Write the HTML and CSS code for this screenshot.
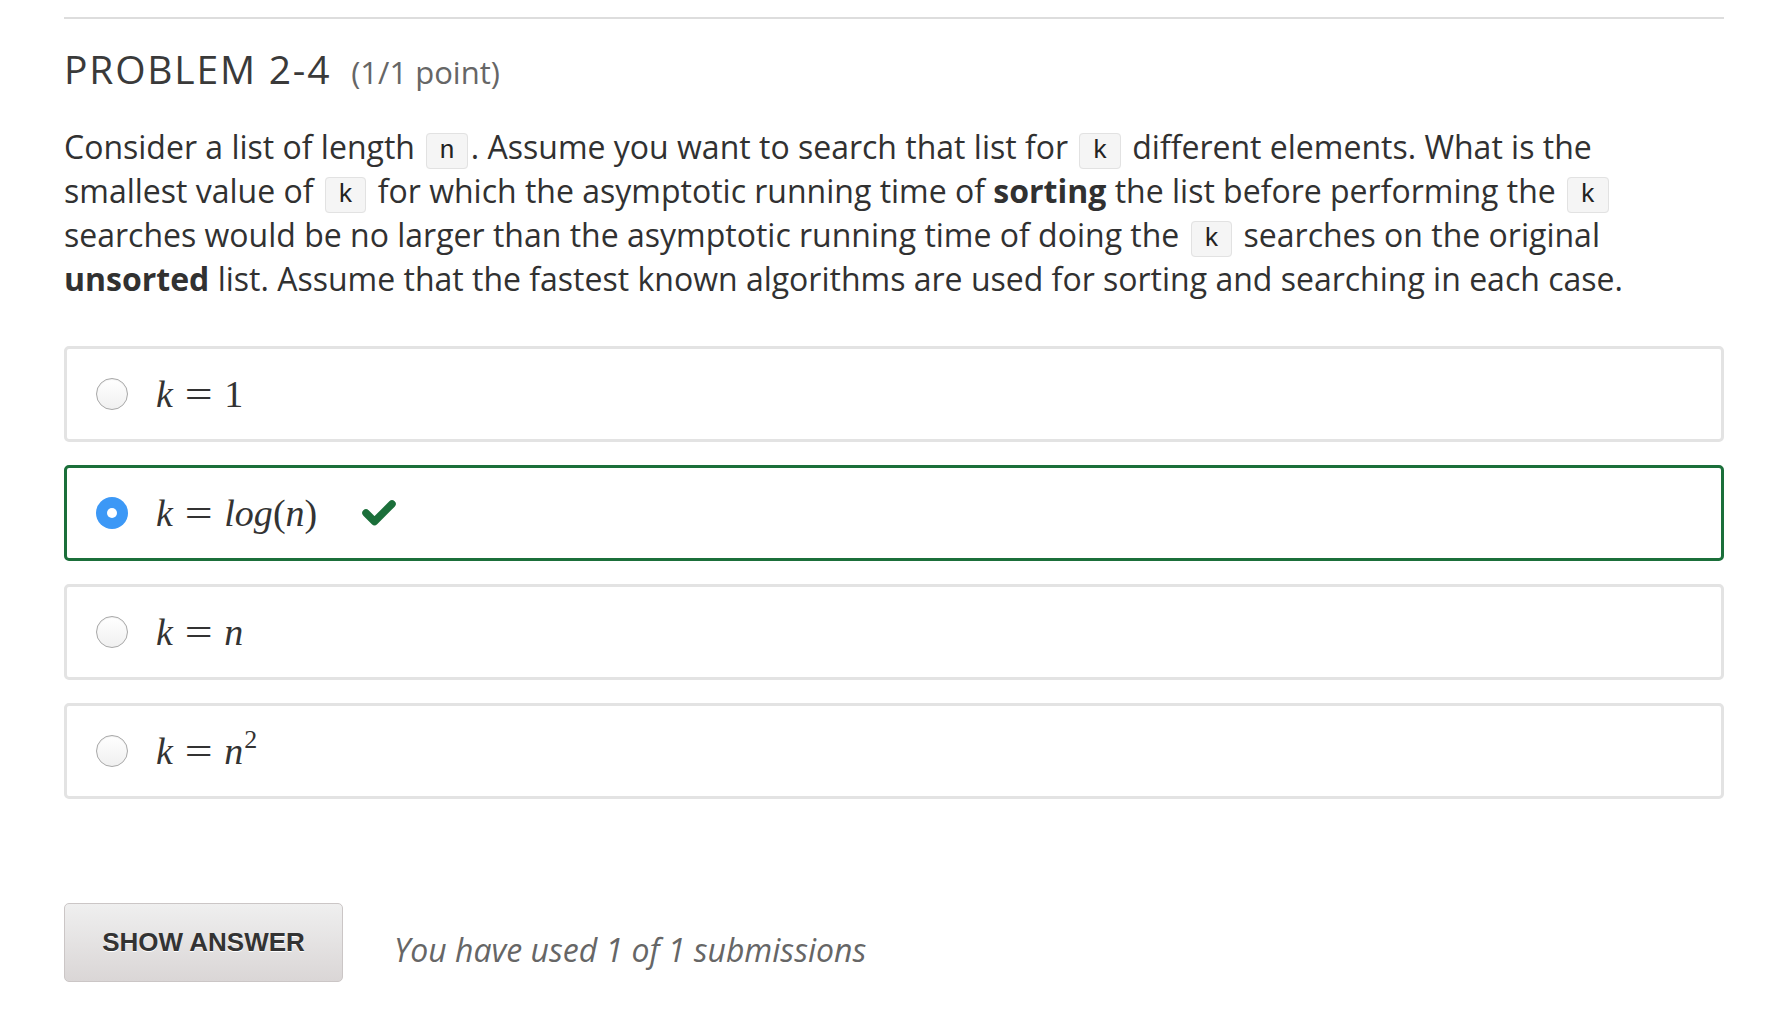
FILE: index.html
```html
<!DOCTYPE html>
<html lang="en">
<head>
<meta charset="utf-8">
<title>Problem 2-4</title>
<link rel="stylesheet" href="styles.css">
</head>
<body>
<div class="page">
  <div class="rule"></div>
  <h2 class="problem-title">PROBLEM 2-4 <span class="points">(1/1 point)</span></h2>
  <p class="prompt">Consider a list of length <code>n</code>. Assume you want to search that list for <code>k</code> different elements. What is the smallest value of <code>k</code> for which the asymptotic running time of <strong>sorting</strong> the list before performing the <code>k</code> searches would be no larger than the asymptotic running time of doing the <code>k</code> searches on the original <strong>unsorted</strong> list. Assume that the fastest known algorithms are used for sorting and searching in each case.</p>

  <div class="choices">
    <label class="choice">
      <span class="radio"></span>
      <span class="math"><i>k</i><span class="eq">=</span>1</span>
    </label>
    <label class="choice correct">
      <span class="radio checked"></span>
      <span class="math"><i>k</i><span class="eq">=</span><i>log</i>(<i>n</i>)</span>
      <svg class="check" width="36" height="28" viewBox="0 0 36 28" aria-hidden="true">
        <polyline points="5,14 13.5,22.5 31,5" fill="none" stroke="#1b6f3a" stroke-width="7.5" stroke-linecap="round" stroke-linejoin="round"/>
      </svg>
    </label>
    <label class="choice">
      <span class="radio"></span>
      <span class="math"><i>k</i><span class="eq">=</span><i>n</i></span>
    </label>
    <label class="choice">
      <span class="radio"></span>
      <span class="math"><i>k</i><span class="eq">=</span><i>n</i><sup>2</sup></span>
    </label>
  </div>

  <div class="actions">
    <button class="show-answer">SHOW ANSWER</button>
    <span class="submissions">You have used 1 of 1 submissions</span>
  </div>
</div>
</body>
</html>
```

FILE: styles.css
```css
html, body {
  margin: 0;
  padding: 0;
  background: #ffffff;
}

.page {
  padding: 0 66px 0 64px;
  font-family: "Open Sans", "Noto Sans", sans-serif;
  color: #313131;
}

.rule {
  margin-top: 17px;
  height: 2px;
  background: #dddddd;
}

.problem-title {
  margin: 28px 0 0 0;
  font-size: 39px;
  line-height: 44px;
  font-weight: 400;
  letter-spacing: 1.8px;
  color: #3a3a3a;
}

.points {
  margin-left: 8px;
  font-size: 31px;
  letter-spacing: 0;
  color: #666666;
}

.prompt {
  margin: 31px 0 0 0;
  max-width: 1600px;
  font-size: 32px;
  line-height: 44px;
  color: #313131;
}

.prompt strong {
  font-weight: 700;
}

.prompt code {
  font-family: "Liberation Mono", "DejaVu Sans Mono", monospace;
  font-size: 26px;
  line-height: 1;
  padding: 2px 12px;
  margin: 0 3px;
  background: #f5f5f5;
  border: 1px solid #e2e2e2;
  border-radius: 4px;
  color: #222;
  vertical-align: 1px;
}

.choices {
  margin-top: 45px;
  display: flex;
  flex-direction: column;
  gap: 23px;
}

.choice {
  display: flex;
  align-items: center;
  height: 96px;
  box-sizing: border-box;
  border: 3px solid #e3e3e3;
  border-radius: 5px;
  padding-left: 29px;
}

.choice.correct {
  border-color: #1b6f3a;
}

.radio {
  width: 32px;
  height: 32px;
  box-sizing: border-box;
  border-radius: 50%;
  border: 1px solid #a8a8a8;
  background: linear-gradient(#ffffff, #f0f0f0);
  box-shadow: inset 0 1px 1px rgba(0,0,0,0.06);
  flex: none;
  position: relative;
}

.radio.checked {
  border: none;
  background: #3c98f6;
  box-shadow: none;
}

.radio.checked::after {
  content: "";
  position: absolute;
  left: 11px;
  top: 11px;
  width: 10px;
  height: 10px;
  border-radius: 50%;
  background: #ffffff;
}

.math {
  margin-left: 28px;
  font-family: "Liberation Serif", "Times New Roman", serif;
  font-size: 38px;
  line-height: 40px;
  color: #333333;
}

.math i {
  font-style: italic;
}

.math .eq {
  display: inline-block;
  margin: 0 15px 0 15px;
  transform: scaleX(1.3);
}

.math sup {
  font-size: 26px;
  vertical-align: 16px;
  line-height: 0;
  margin-left: 1px;
}

.check {
  margin-left: 44px;
  flex: none;
}

.actions {
  margin-top: 104px;
  display: flex;
  align-items: center;
}

.show-answer {
  width: 279px;
  height: 79px;
  box-sizing: border-box;
  border: 1px solid #cbc6c6;
  border-radius: 5px;
  background: linear-gradient(#efefef, #dad6d6);
  font-family: "Liberation Sans", Arial, sans-serif;
  font-weight: 700;
  font-size: 26px;
  color: #333333;
  text-shadow: 0 1px 0 #ffffff;
  padding: 0;
}

.submissions {
  margin-left: 51px;
  margin-top: 14px;
  font-family: "Open Sans", "Noto Sans", sans-serif;
  font-style: italic;
  font-size: 32px;
  color: #666666;
}
```
